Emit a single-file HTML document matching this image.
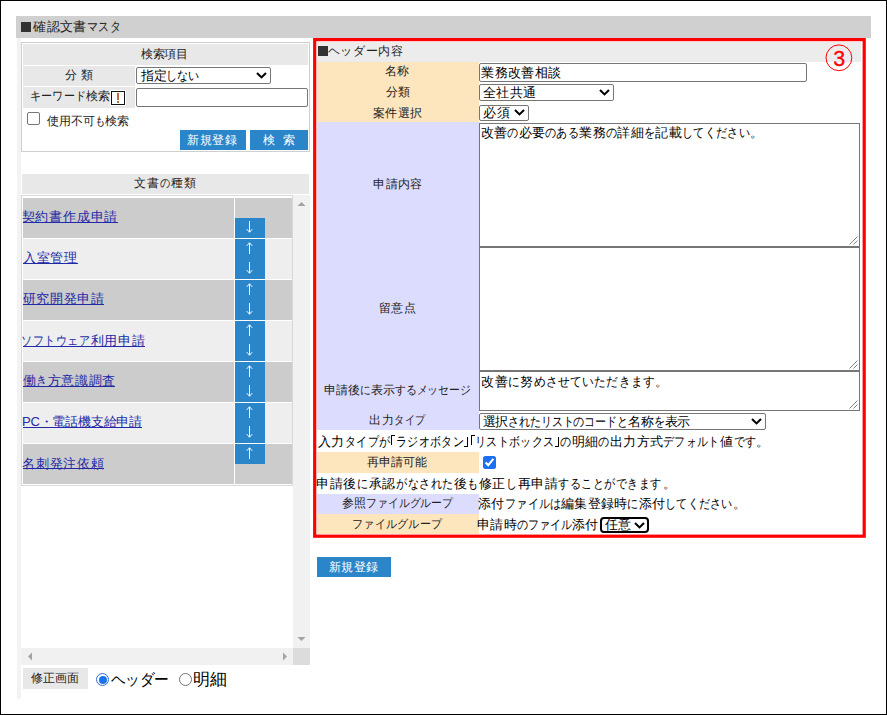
<!DOCTYPE html>
<html><head><meta charset="utf-8">
<style>
*{box-sizing:border-box;margin:0;padding:0}
html,body{width:887px;height:715px;overflow:hidden;background:#fff}
body{position:relative;font-family:"Liberation Sans",sans-serif;font-size:12px;color:#333}
.a{position:absolute}
svg.a{display:block}
.t{position:absolute;white-space:nowrap;line-height:20px;-webkit-text-stroke:0px currentColor}
</style></head><body>
<div class="a" style="left:0px;top:0px;width:887px;height:715px;border:1px solid #000"></div>
<div class="a" style="left:16px;top:16px;width:855px;height:22px;background:#d0d0d0"></div>
<div class="a" style="left:21px;top:22px;width:10px;height:10px;background:#333"></div>
<div class="a" style="left:17px;top:38px;width:4px;height:661px;background:#f3f3f3"></div>
<div class="a" style="left:21px;top:42px;width:289px;height:110px;border:1px solid #cfcfcf;background:#fff"></div>
<div class="a" style="left:23px;top:44px;width:285px;height:21px;background:#e8e8e8"></div>
<div class="a" style="left:23px;top:66px;width:112px;height:20px;background:#e8e8e8"></div>
<div class="a" style="left:23px;top:87px;width:112px;height:21px;background:#e8e8e8"></div>
<div class="a" style="left:136px;top:67px;width:135px;height:17px;border:1px solid #767676;border-radius:2px;background:#fff"></div>
<svg class="a" style="left:256px;top:72px" width="11" height="7"><path d="M1 1 L5.5 5.4 L10 1" fill="none" stroke="#000" stroke-width="2.1"/></svg>
<div class="a" style="left:136px;top:88px;width:172px;height:19px;border:1px solid #767676;border-radius:2px;background:#fff"></div>
<div class="a" style="left:111px;top:91px;width:14px;height:14px;border:1px solid #111;background:#fff;box-shadow:0 0 0 1px #fff"></div>
<div class="a" style="left:117px;top:93px;width:2px;height:7px;background:#c6653c"></div>
<div class="a" style="left:117px;top:101px;width:2px;height:2px;background:#b9704f"></div>
<div class="a" style="left:27px;top:112px;width:13px;height:13px;border:1px solid #767676;border-radius:2px;background:#fff"></div>
<div class="a" style="left:180px;top:130px;width:66px;height:20px;background:#2b85c9"></div>
<div class="a" style="left:250px;top:130px;width:58px;height:20px;background:#2b85c9"></div>
<div class="a" style="left:22px;top:174px;width:287px;height:20px;background:#e8e8e8"></div>
<div class="a" style="left:21px;top:195px;width:272px;height:291px;border:1px solid #d8d8d8;background:#fff"></div>
<div class="a" style="left:23px;top:198px;width:211px;height:40px;background:#cccccc"></div>
<div class="a" style="left:235px;top:198px;width:57px;height:40px;background:#cccccc"></div>
<div class="a" style="left:235px;top:218px;width:30px;height:20px;background:#2b85c9"></div>
<svg class="a" style="left:244px;top:221px" width="11" height="13"><path d="M5.5 0 V11.2 M2.8 8.2 L5.5 11.2 L8.2 8.2" fill="none" stroke="#fff" stroke-width="1"/></svg>
<div class="a" style="left:23px;top:239px;width:211px;height:40px;background:#eeeeee"></div>
<div class="a" style="left:235px;top:239px;width:57px;height:40px;background:#eeeeee"></div>
<div class="a" style="left:235px;top:239px;width:30px;height:20px;background:#2b85c9"></div>
<svg class="a" style="left:244px;top:242px" width="11" height="13"><path d="M5.5 0.8 V12 M2.8 3.8 L5.5 0.8 L8.2 3.8" fill="none" stroke="#fff" stroke-width="1"/></svg>
<div class="a" style="left:235px;top:259px;width:30px;height:20px;background:#2b85c9"></div>
<svg class="a" style="left:244px;top:262px" width="11" height="13"><path d="M5.5 0 V11.2 M2.8 8.2 L5.5 11.2 L8.2 8.2" fill="none" stroke="#fff" stroke-width="1"/></svg>
<div class="a" style="left:23px;top:280px;width:211px;height:40px;background:#cccccc"></div>
<div class="a" style="left:235px;top:280px;width:57px;height:40px;background:#cccccc"></div>
<div class="a" style="left:235px;top:280px;width:30px;height:20px;background:#2b85c9"></div>
<svg class="a" style="left:244px;top:283px" width="11" height="13"><path d="M5.5 0.8 V12 M2.8 3.8 L5.5 0.8 L8.2 3.8" fill="none" stroke="#fff" stroke-width="1"/></svg>
<div class="a" style="left:235px;top:300px;width:30px;height:20px;background:#2b85c9"></div>
<svg class="a" style="left:244px;top:303px" width="11" height="13"><path d="M5.5 0 V11.2 M2.8 8.2 L5.5 11.2 L8.2 8.2" fill="none" stroke="#fff" stroke-width="1"/></svg>
<div class="a" style="left:23px;top:321px;width:211px;height:40px;background:#eeeeee"></div>
<div class="a" style="left:235px;top:321px;width:57px;height:40px;background:#eeeeee"></div>
<div class="a" style="left:235px;top:321px;width:30px;height:20px;background:#2b85c9"></div>
<svg class="a" style="left:244px;top:324px" width="11" height="13"><path d="M5.5 0.8 V12 M2.8 3.8 L5.5 0.8 L8.2 3.8" fill="none" stroke="#fff" stroke-width="1"/></svg>
<div class="a" style="left:235px;top:341px;width:30px;height:20px;background:#2b85c9"></div>
<svg class="a" style="left:244px;top:344px" width="11" height="13"><path d="M5.5 0 V11.2 M2.8 8.2 L5.5 11.2 L8.2 8.2" fill="none" stroke="#fff" stroke-width="1"/></svg>
<div class="a" style="left:23px;top:362px;width:211px;height:40px;background:#cccccc"></div>
<div class="a" style="left:235px;top:362px;width:57px;height:40px;background:#cccccc"></div>
<div class="a" style="left:235px;top:362px;width:30px;height:20px;background:#2b85c9"></div>
<svg class="a" style="left:244px;top:365px" width="11" height="13"><path d="M5.5 0.8 V12 M2.8 3.8 L5.5 0.8 L8.2 3.8" fill="none" stroke="#fff" stroke-width="1"/></svg>
<div class="a" style="left:235px;top:382px;width:30px;height:20px;background:#2b85c9"></div>
<svg class="a" style="left:244px;top:385px" width="11" height="13"><path d="M5.5 0 V11.2 M2.8 8.2 L5.5 11.2 L8.2 8.2" fill="none" stroke="#fff" stroke-width="1"/></svg>
<div class="a" style="left:23px;top:403px;width:211px;height:40px;background:#eeeeee"></div>
<div class="a" style="left:235px;top:403px;width:57px;height:40px;background:#eeeeee"></div>
<div class="a" style="left:235px;top:403px;width:30px;height:20px;background:#2b85c9"></div>
<svg class="a" style="left:244px;top:406px" width="11" height="13"><path d="M5.5 0.8 V12 M2.8 3.8 L5.5 0.8 L8.2 3.8" fill="none" stroke="#fff" stroke-width="1"/></svg>
<div class="a" style="left:235px;top:423px;width:30px;height:20px;background:#2b85c9"></div>
<svg class="a" style="left:244px;top:426px" width="11" height="13"><path d="M5.5 0 V11.2 M2.8 8.2 L5.5 11.2 L8.2 8.2" fill="none" stroke="#fff" stroke-width="1"/></svg>
<div class="a" style="left:23px;top:444px;width:211px;height:40px;background:#cccccc"></div>
<div class="a" style="left:235px;top:444px;width:57px;height:40px;background:#cccccc"></div>
<div class="a" style="left:235px;top:444px;width:30px;height:20px;background:#2b85c9"></div>
<svg class="a" style="left:244px;top:447px" width="11" height="13"><path d="M5.5 0.8 V12 M2.8 3.8 L5.5 0.8 L8.2 3.8" fill="none" stroke="#fff" stroke-width="1"/></svg>
<div class="a" style="left:293px;top:195px;width:17px;height:453px;background:#f1f1f1"></div>
<svg class="a" style="left:297px;top:201px" width="9" height="6"><path d="M0.5 5 L4.5 1 L8.5 5 Z" fill="#a3a3a3"/></svg>
<svg class="a" style="left:297px;top:636px" width="9" height="6"><path d="M0.5 1 L4.5 5 L8.5 1 Z" fill="#a3a3a3"/></svg>
<div class="a" style="left:21px;top:648px;width:272px;height:17px;background:#f1f1f1"></div>
<svg class="a" style="left:27px;top:652px" width="6" height="9"><path d="M5 0.5 L1 4.5 L5 8.5 Z" fill="#a3a3a3"/></svg>
<svg class="a" style="left:282px;top:652px" width="6" height="9"><path d="M1 0.5 L5 4.5 L1 8.5 Z" fill="#a3a3a3"/></svg>
<div class="a" style="left:293px;top:648px;width:17px;height:17px;background:#dcdcdc"></div>
<div class="a" style="left:23px;top:668px;width:65px;height:21px;background:#e8e8e8"></div>
<div class="a" style="left:96px;top:673px;width:13px;height:13px;border-radius:50%;border:1.5px solid #2a6fd6;background:#fff"></div>
<div class="a" style="left:98.5px;top:675.5px;width:8px;height:8px;border-radius:50%;background:#1a73f0"></div>
<div class="a" style="left:179px;top:673px;width:13px;height:13px;border-radius:50%;border:1px solid #767676;background:#fff"></div>
<div class="a" style="left:317px;top:42px;width:544px;height:20px;background:#ececec"></div>
<div class="a" style="left:318px;top:46px;width:10px;height:10px;background:#333"></div>
<div class="a" style="left:317px;top:62px;width:162px;height:60px;background:#fde5bd"></div>
<div class="a" style="left:479px;top:63px;width:328px;height:19px;border:1px solid #767676;border-radius:2px;background:#fff"></div>
<div class="a" style="left:479px;top:84px;width:135px;height:17px;border:1px solid #767676;border-radius:2px;background:#fff"></div>
<svg class="a" style="left:599px;top:89px" width="11" height="7"><path d="M1 1 L5.5 5.4 L10 1" fill="none" stroke="#000" stroke-width="2.1"/></svg>
<div class="a" style="left:479px;top:105px;width:50px;height:16px;border:1px solid #767676;border-radius:2px;background:#fff"></div>
<svg class="a" style="left:514px;top:109px" width="11" height="7"><path d="M1 1 L5.5 5.4 L10 1" fill="none" stroke="#000" stroke-width="2.1"/></svg>
<div class="a" style="left:317px;top:122px;width:162px;height:308px;background:#dcdcfe"></div>
<div class="a" style="left:479px;top:123px;width:381px;height:124px;border:1px solid #767676;background:#fff"></div>
<svg class="a" style="left:848px;top:235px" width="10" height="10"><path d="M9.5 1.5 L1.5 9.5 M9.5 5.5 L5.5 9.5" fill="none" stroke="#888" stroke-width="1"/></svg>
<div class="a" style="left:479px;top:247px;width:381px;height:124px;border:1px solid #767676;background:#fff"></div>
<svg class="a" style="left:848px;top:359px" width="10" height="10"><path d="M9.5 1.5 L1.5 9.5 M9.5 5.5 L5.5 9.5" fill="none" stroke="#888" stroke-width="1"/></svg>
<div class="a" style="left:479px;top:371px;width:381px;height:40px;border:1px solid #767676;background:#fff"></div>
<svg class="a" style="left:848px;top:399px" width="10" height="10"><path d="M9.5 1.5 L1.5 9.5 M9.5 5.5 L5.5 9.5" fill="none" stroke="#888" stroke-width="1"/></svg>
<div class="a" style="left:479px;top:413px;width:287px;height:17px;border:1px solid #767676;border-radius:2px;background:#fff"></div>
<svg class="a" style="left:751px;top:418px" width="11" height="7"><path d="M1 1 L5.5 5.4 L10 1" fill="none" stroke="#000" stroke-width="2.1"/></svg>
<div class="a" style="left:317px;top:452px;width:162px;height:21px;background:#fde5bd"></div>
<div class="a" style="left:483px;top:456px;width:13px;height:13px;border-radius:2.5px;background:#1c6ff2"></div>
<svg class="a" style="left:483px;top:456px" width="13" height="13"><path d="M2.6 6.6 L5.2 9.1 L10.4 2.9" fill="none" stroke="#fff" stroke-width="2.1"/></svg>
<div class="a" style="left:317px;top:494px;width:162px;height:20px;background:#dcdcfe"></div>
<div class="a" style="left:317px;top:514px;width:162px;height:20px;background:#fde5bd"></div>
<div class="a" style="left:600px;top:517px;width:49px;height:16px;border:2px solid #000;border-radius:4px;background:#fff"></div>
<svg class="a" style="left:634px;top:522px" width="11" height="7"><path d="M1 1 L5.5 5.4 L10 1" fill="none" stroke="#000" stroke-width="2.1"/></svg>
<div class="a" style="left:317px;top:557px;width:74px;height:20px;background:#2b85c9"></div>
<div class="t" style="left:33.2px;top:17.25px;font-size:13px;letter-spacing:0.333px;color:#222">確認文書<span style="display:inline-block;transform:scaleX(0.85);transform-origin:0 0;margin-right:-5.85px">マスタ</span></div>
<div class="t" style="left:140.7px;top:43.55px;font-size:12px;letter-spacing:-0.133px;color:#222">検索項目</div>
<div class="t" style="left:65.2px;top:64.6px;font-size:12px;letter-spacing:0.4px;color:#222">分 類</div>
<div class="t" style="left:140.7px;top:66.05px;font-size:13px;letter-spacing:-0.15px;color:#000">指定<span style="display:inline-block;transform:scaleX(0.85);transform-origin:0 0;margin-right:-5.85px">しない</span></div>
<div class="t" style="left:29.9px;top:85.95px;font-size:12px;letter-spacing:0.167px;color:#222"><span style="display:inline-block;transform:scaleX(0.92);transform-origin:0 0;margin-right:-4.8px">キーワード</span>検索</div>
<div class="t" style="left:47.45px;top:110.55px;font-size:12px;letter-spacing:-0.083px;color:#222">使用不可<span style="display:inline-block;transform:scaleX(0.85);transform-origin:0 0;margin-right:-1.8px">も</span>検索</div>
<div class="t" style="left:187.3px;top:129.85px;font-size:12px;letter-spacing:0.6px;color:#fff">新規登録</div>
<div class="t" style="left:262.6px;top:130.35px;font-size:12px;letter-spacing:0px;color:#fff">検</div>
<div class="t" style="left:283.05px;top:129.85px;font-size:12px;letter-spacing:0px;color:#fff">索</div>
<div class="t" style="left:134.3px;top:172.65px;font-size:12px;letter-spacing:0.8px;color:#222">文書<span style="display:inline-block;transform:scaleX(0.85);transform-origin:0 0;margin-right:-1.8px">の</span>種類</div>
<div class="t" style="left:21.65px;top:207.0px;font-size:13px;letter-spacing:0.783px;color:#2129a6">契約書作成申請</div>
<div class="a" style="left:23px;top:222px;width:95px;height:1px;background:#2129a6"></div>
<div class="t" style="left:22.65px;top:248.0px;font-size:13px;letter-spacing:0.9px;color:#2129a6">入室管理</div>
<div class="a" style="left:23px;top:263px;width:55px;height:1px;background:#2129a6"></div>
<div class="t" style="left:22.85px;top:289.45px;font-size:13px;letter-spacing:0.62px;color:#2129a6">研究開発申請</div>
<div class="a" style="left:23px;top:304px;width:81px;height:1px;background:#2129a6"></div>
<div class="t" style="left:20.6px;top:330.5px;font-size:13px;letter-spacing:0.622px;color:#2129a6"><span style="display:inline-block;transform:scaleX(0.85);transform-origin:0 0;margin-right:-11.7px">ソフトウェア</span>利用申請</div>
<div class="a" style="left:23px;top:346px;width:122px;height:1px;background:#2129a6"></div>
<div class="t" style="left:22.55px;top:371.35px;font-size:13px;letter-spacing:0.583px;color:#2129a6">働<span style="display:inline-block;transform:scaleX(0.85);transform-origin:0 0;margin-right:-1.95px">き</span>方意識調査</div>
<div class="a" style="left:23px;top:386px;width:92px;height:1px;background:#2129a6"></div>
<div class="t" style="left:21.95px;top:412.3px;font-size:13px;letter-spacing:-0.189px;color:#2129a6">PC・電話機支給申請</div>
<div class="a" style="left:23px;top:427px;width:119px;height:1px;background:#2129a6"></div>
<div class="t" style="left:21.9px;top:453.55px;font-size:13px;letter-spacing:0.84px;color:#2129a6">名刺発注依頼</div>
<div class="a" style="left:23px;top:468px;width:81px;height:1px;background:#2129a6"></div>
<div class="t" style="left:31.25px;top:667.65px;font-size:12px;letter-spacing:0.033px;color:#222">修正画面</div>
<div class="t" style="left:111.35px;top:669.5px;font-size:16px;letter-spacing:-0.3px;color:#000"><span style="display:inline-block;transform:scaleX(0.92);transform-origin:0 0;margin-right:-5.12px">ヘッダー</span></div>
<div class="t" style="left:193.3px;top:669.5px;font-size:17px;letter-spacing:0.2px;color:#000">明細</div>
<div class="t" style="left:327.7px;top:41.2px;font-size:12px;letter-spacing:0.64px;color:#222"><span style="display:inline-block;transform:scaleX(1.0);transform-origin:0 0;margin-right:-0.0px">ヘッダー</span>内容</div>
<div class="t" style="left:385.4px;top:60.85px;font-size:12px;letter-spacing:-0.2px;color:#222">名称</div>
<div class="t" style="left:386.25px;top:81.9px;font-size:12px;letter-spacing:-0.5px;color:#222">分類</div>
<div class="t" style="left:373.1px;top:102.5px;font-size:12px;letter-spacing:0.4px;color:#222">案件選択</div>
<div class="t" style="left:481.45px;top:63.25px;font-size:13px;letter-spacing:0.34px;color:#000">業務改善相談</div>
<div class="t" style="left:482.55px;top:83.25px;font-size:13px;letter-spacing:0.5px;color:#000">全社共通</div>
<div class="t" style="left:482.7px;top:102.8px;font-size:13px;letter-spacing:1.8px;color:#000">必須</div>
<div class="t" style="left:373.35px;top:173.65px;font-size:12px;letter-spacing:0.367px;color:#222">申請内容</div>
<div class="t" style="left:378.9px;top:297.55px;font-size:12px;letter-spacing:0.6px;color:#222">留意点</div>
<div class="t" style="left:324.35px;top:379.6px;font-size:12px;letter-spacing:0.008px;color:#222">申請後<span style="display:inline-block;transform:scaleX(0.9);transform-origin:0 0;margin-right:-1.2px">に</span>表示<span style="display:inline-block;transform:scaleX(0.9);transform-origin:0 0;margin-right:-8.4px">するメッセージ</span></div>
<div class="t" style="left:369.4px;top:409.85px;font-size:12px;letter-spacing:0.4px;color:#222">出力<span style="display:inline-block;transform:scaleX(0.85);transform-origin:0 0;margin-right:-5.4px">タイプ</span></div>
<div class="t" style="left:480.5px;top:122.65px;font-size:13px;letter-spacing:0.318px;color:#000">改善<span style="display:inline-block;transform:scaleX(0.85);transform-origin:0 0;margin-right:-1.95px">の</span>必要<span style="display:inline-block;transform:scaleX(0.85);transform-origin:0 0;margin-right:-5.85px">のある</span>業務<span style="display:inline-block;transform:scaleX(0.85);transform-origin:0 0;margin-right:-1.95px">の</span>詳細<span style="display:inline-block;transform:scaleX(0.85);transform-origin:0 0;margin-right:-1.95px">を</span>記載<span style="display:inline-block;transform:scaleX(0.85);transform-origin:0 0;margin-right:-11.7px">してください</span>。</div>
<div class="t" style="left:481.2px;top:371.5px;font-size:13px;letter-spacing:0.414px;color:#000">改善<span style="display:inline-block;transform:scaleX(0.9);transform-origin:0 0;margin-right:-1.3px">に</span>努<span style="display:inline-block;transform:scaleX(0.9);transform-origin:0 0;margin-right:-13.0px">めさせていただきます</span>。</div>
<div class="t" style="left:482.6px;top:412.25px;font-size:13px;letter-spacing:-0.165px;color:#000">選択<span style="display:inline-block;transform:scaleX(0.85);transform-origin:0 0;margin-right:-21.45px">されたリストのコードと</span>名称<span style="display:inline-block;transform:scaleX(0.85);transform-origin:0 0;margin-right:-1.95px">を</span>表示</div>
<div class="t" style="left:318.05px;top:432.0px;font-size:13px;letter-spacing:0.336px;color:#000">入力<span style="display:inline-block;transform:scaleX(0.85);transform-origin:0 0;margin-right:-7.8px">タイプが</span><span style="display:inline-block;width:5.5px;height:0;position:relative"><i style="position:absolute;left:1.0px;top:-11.0px;width:4px;height:10.0px;border-left:1px solid currentColor;border-top:1px solid currentColor"></i></span><span style="display:inline-block;transform:scaleX(0.85);transform-origin:0 0;margin-right:-11.7px">ラジオボタン</span><span style="display:inline-block;width:5.5px;height:0;position:relative"><i style="position:absolute;left:0px;top:-9.1px;width:4px;height:10.0px;border-right:1px solid currentColor;border-bottom:1px solid currentColor"></i></span><span style="display:inline-block;width:5.5px;height:0;position:relative"><i style="position:absolute;left:1.0px;top:-11.0px;width:4px;height:10.0px;border-left:1px solid currentColor;border-top:1px solid currentColor"></i></span><span style="display:inline-block;transform:scaleX(0.85);transform-origin:0 0;margin-right:-13.65px">リストボックス</span><span style="display:inline-block;width:5.5px;height:0;position:relative"><i style="position:absolute;left:0px;top:-9.1px;width:4px;height:10.0px;border-right:1px solid currentColor;border-bottom:1px solid currentColor"></i></span><span style="display:inline-block;transform:scaleX(0.85);transform-origin:0 0;margin-right:-1.95px">の</span>明細<span style="display:inline-block;transform:scaleX(0.85);transform-origin:0 0;margin-right:-1.95px">の</span>出力方式<span style="display:inline-block;transform:scaleX(0.85);transform-origin:0 0;margin-right:-9.75px">デフォルト</span>値<span style="display:inline-block;transform:scaleX(0.85);transform-origin:0 0;margin-right:-3.9px">です</span>。</div>
<div class="t" style="left:366.9px;top:452.05px;font-size:12px;letter-spacing:0.05px;color:#222">再申請可能</div>
<div class="t" style="left:316.25px;top:473.95px;font-size:13px;letter-spacing:0.554px;color:#000">申請後<span style="display:inline-block;transform:scaleX(0.85);transform-origin:0 0;margin-right:-1.95px">に</span>承認<span style="display:inline-block;transform:scaleX(0.85);transform-origin:0 0;margin-right:-9.75px">がなされた</span>後<span style="display:inline-block;transform:scaleX(0.85);transform-origin:0 0;margin-right:-1.95px">も</span>修正<span style="display:inline-block;transform:scaleX(0.85);transform-origin:0 0;margin-right:-1.95px">し</span>再申請<span style="display:inline-block;transform:scaleX(0.85);transform-origin:0 0;margin-right:-17.55px">することができます</span>。</div>
<div class="t" style="left:341.5px;top:493.25px;font-size:12px;letter-spacing:0.111px;color:#222">参照<span style="display:inline-block;transform:scaleX(0.9);transform-origin:0 0;margin-right:-9.6px">ファイルグループ</span></div>
<div class="t" style="left:478.05px;top:493.8px;font-size:13px;letter-spacing:0.262px;color:#000">添付<span style="display:inline-block;transform:scaleX(0.85);transform-origin:0 0;margin-right:-9.75px">ファイルは</span>編集登録時<span style="display:inline-block;transform:scaleX(0.85);transform-origin:0 0;margin-right:-1.95px">に</span>添付<span style="display:inline-block;transform:scaleX(0.85);transform-origin:0 0;margin-right:-11.7px">してください</span>。</div>
<div class="t" style="left:351.95px;top:513.95px;font-size:12px;letter-spacing:0.271px;color:#222"><span style="display:inline-block;transform:scaleX(0.92);transform-origin:0 0;margin-right:-7.68px">ファイルグループ</span></div>
<div class="t" style="left:477.45px;top:514.6px;font-size:13px;letter-spacing:0.033px;color:#000">申請時<span style="display:inline-block;transform:scaleX(0.85);transform-origin:0 0;margin-right:-9.75px">のファイル</span>添付</div>
<div class="t" style="left:604.55px;top:514.5px;font-size:13px;letter-spacing:0.3px;color:#000">任意</div>
<div class="t" style="left:328.5px;top:556.5px;font-size:12px;letter-spacing:0.533px;color:#fff">新規登録</div>
<svg class="a" style="left:0;top:0" width="887" height="715"><rect x="314.7" y="39.6" width="549.5" height="496.6" fill="none" stroke="#ff0000" stroke-width="3.2"/><circle cx="838.9" cy="57.8" r="12.9" fill="none" stroke="#ff0000" stroke-width="1"/><text x="839.2" y="65.6" text-anchor="middle" font-family="Liberation Sans" font-size="21.5" fill="#ff0000" stroke="#ff0000" stroke-width="0.3">3</text></svg>
</body></html>
